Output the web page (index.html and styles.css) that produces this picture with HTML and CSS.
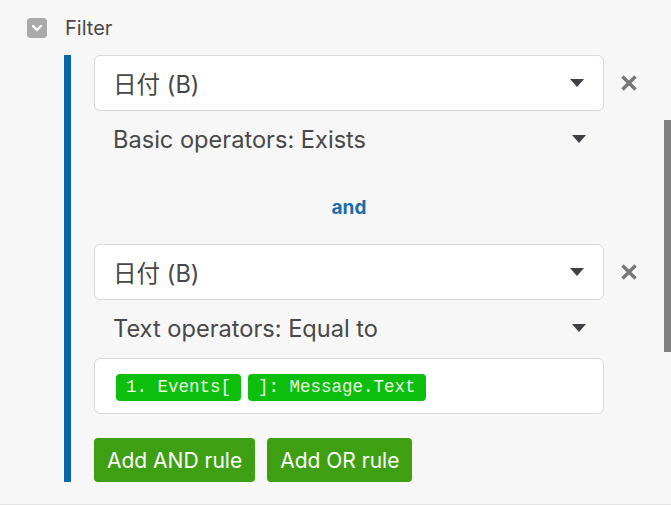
FILE: index.html
```html
<!DOCTYPE html>
<html lang="en">
<head>
    <meta charset="UTF-8">
    <meta name="viewport" content="width=device-width, initial-scale=1.0">
    <title>Filter</title>
    <link rel="stylesheet" href="styles.css">
</head>
<body>
    <div class="filter">
        <div class="filter-head">
            <span class="checkbox">
                <svg width="14" height="14" viewBox="0 0 14 14"><path d="M3 5 L7 9 L11 5" fill="none" stroke="#fff" stroke-width="2.4" stroke-linecap="round" stroke-linejoin="round"/></svg>
            </span>
            <span class="filter-title">Filter</span>
        </div>

        <div class="rule-group">
            <div class="rule">
                <div class="rule-row">
                    <div class="select">
                        <span>日付 (B)</span>
                        <span class="caret"></span>
                    </div>
                    <button class="remove">
                        <svg width="18" height="18" viewBox="0 0 18 18"><path d="M2.5 2.5 L15.5 15.5 M15.5 2.5 L2.5 15.5" stroke="#777" stroke-width="3.4"/></svg>
                    </button>
                </div>
                <div class="operator">
                    <span>Basic operators: Exists</span>
                    <span class="caret"></span>
                </div>
            </div>

            <div class="conj">and</div>

            <div class="rule">
                <div class="rule-row">
                    <div class="select">
                        <span>日付 (B)</span>
                        <span class="caret"></span>
                    </div>
                    <button class="remove">
                        <svg width="18" height="18" viewBox="0 0 18 18"><path d="M2.5 2.5 L15.5 15.5 M15.5 2.5 L2.5 15.5" stroke="#777" stroke-width="3.4"/></svg>
                    </button>
                </div>
                <div class="operator">
                    <span>Text operators: Equal to</span>
                    <span class="caret"></span>
                </div>
                <div class="value-box">
                    <span class="chip">1. Events[</span>
                    <span class="chip">]: Message.Text</span>
                </div>
            </div>

            <div class="actions">
                <button class="add-btn">Add AND rule</button>
                <button class="add-btn">Add OR rule</button>
            </div>
        </div>
    </div>

    <div class="scroll-thumb"></div>
</body>
</html>
```

FILE: styles.css
```css
* {
    margin: 0;
    padding: 0;
    box-sizing: border-box;
}

body {
    font-family: Inter, 'Noto Sans CJK JP', sans-serif;
    background: #f7f7f7;
    color: #484848;
    height: 505px;
    overflow: hidden;
    border-bottom: 1px solid #e4e4e4;
}

.filter {
    padding-top: 18px;
}

.filter-head {
    display: flex;
    align-items: center;
    padding-left: 27px;
    height: 20px;
}

.checkbox {
    width: 20px;
    height: 20px;
    border-radius: 4px;
    background: #aaaaaa;
    display: flex;
    align-items: center;
    justify-content: center;
}

.filter-title {
    margin-left: 18px;
    font-size: 20px;
    color: #484848;
}

.rule-group {
    margin-top: 17px;
    margin-left: 64px;
    border-left: 7px solid #0966a8;
    padding-left: 23px;
}

.rule-row {
    display: flex;
    align-items: center;
}

.select {
    flex: 0 0 510px;
    height: 56px;
    background: #fff;
    border: 1px solid #d9d9d9;
    border-radius: 6px;
    display: flex;
    align-items: center;
    justify-content: space-between;
    padding: 0 19px 0 18px;
    font-size: 23.6px;
}

.caret {
    width: 0;
    height: 0;
    border-left: 7.5px solid transparent;
    border-right: 7.5px solid transparent;
    border-top: 8px solid #3e4045;
}

.remove {
    background: none;
    border: none;
    margin-left: 16px;
    width: 18px;
    height: 18px;
    display: flex;
}

.operator {
    width: 510px;
    height: 56px;
    display: flex;
    align-items: center;
    justify-content: space-between;
    padding: 0 18px 0 19px;
    font-size: 23.6px;
}

.conj {
    width: 510px;
    height: 77px;
    display: flex;
    align-items: center;
    justify-content: center;
    padding-top: 3px;
    font-size: 19px;
    font-weight: 700;
    color: #1a6ea8;
}

.value-box {
    width: 510px;
    height: 56px;
    margin-top: 2px;
    background: #fff;
    border: 1px solid #d9d9d9;
    border-radius: 6px;
    display: flex;
    align-items: center;
    gap: 7px;
    padding-left: 21px;
    padding-top: 2px;
}

.chip {
    height: 27px;
    padding: 0 10px;
    background: #0cbf0c;
    color: #e9fbe4;
    border-radius: 4px;
    font-family: 'Liberation Mono', monospace;
    font-size: 17.5px;
    line-height: 27px;
}

.actions {
    display: flex;
    gap: 12px;
    margin-top: 24px;
}

.add-btn {
    height: 44px;
    padding: 0 13px;
    background: #3e9f13;
    color: #fff;
    border: none;
    border-radius: 4px;
    font-family: Inter, sans-serif;
    font-size: 21px;
}

.scroll-thumb {
    position: fixed;
    right: 0;
    top: 120px;
    width: 7px;
    height: 232px;
    background: #808080;
}
```
